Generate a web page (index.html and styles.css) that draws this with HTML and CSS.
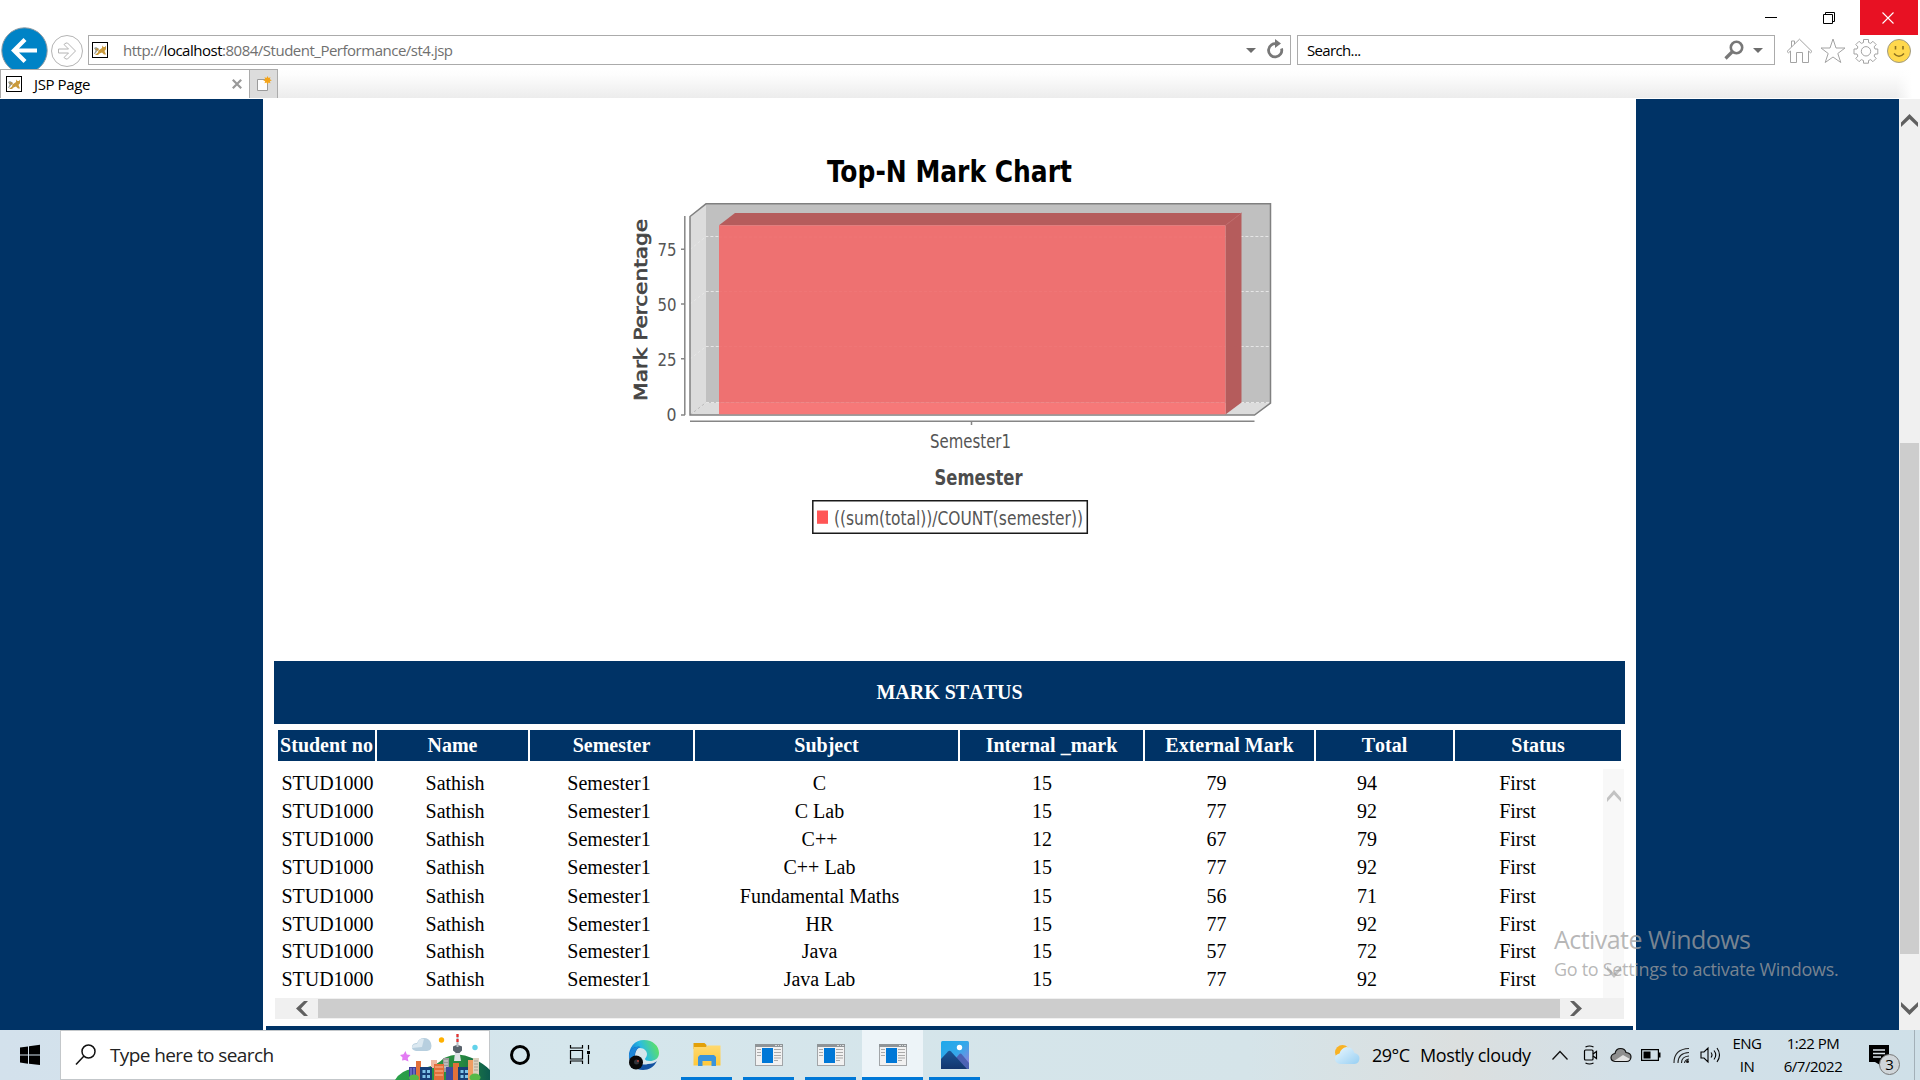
FILE: index.html
```html
<!DOCTYPE html>
<html lang="en">
<head>
<meta charset="utf-8">
<title>JSP Page</title>
<link rel="stylesheet" href="styles.css">
</head>
<body>
<svg width="0" height="0" class="defs">
  <defs>
    <symbol id="cat" viewBox="0 0 16 16"><rect x=".5" y=".5" width="15" height="15" fill="#fff" stroke="#000"/><path d="M6.500 8.500 10 6l.3-2.500L11.500 5h1.300l1.200-1.300v3.500L12.500 9l1.500 3.500h-2L10 10.500l-2.500 1-1.500 1.500H3l3-2.500z" fill="#c99a3c"/><path d="M2 6 4 5l2.500 1.500L5 9.500 3 12H2l1.500-3.500z" fill="#9aa09b"/><path d="M3 7.500 5 6l2 1-1 2z" fill="#b9924a"/></symbol>
    <symbol id="window" viewBox="0 0 28 22"><rect x=".5" y=".5" width="27" height="21" fill="#f1f1f1" stroke="#a2a5a8"/><path d="M0 0h28v3H0z" fill="#8f9497"/><path d="M20 1h2v1h-2zm3 0h1v1h-1zm2 0h2v1h-2z" fill="#d9dcde"/><path d="M7 4h11v15H7z" fill="#0078d7"/><path d="M19 5.500h7M19 8.500h7M19 11.500h7M19 14h7M19 16.500h4M2 5.500h4M2 8.500h4M2 11.500h4" stroke="#aaa" stroke-width="1.200"/></symbol>
    <linearGradient id="edgeTop" x1="0" y1=".6" x2="1" y2=".3"><stop offset="0" stop-color="#0b6fd3"/><stop offset=".45" stop-color="#2bbce0"/><stop offset="1" stop-color="#62e45c"/></linearGradient>
    <linearGradient id="folder" x1="0" y1="0" x2="0" y2="1"><stop offset="0" stop-color="#ffd96f"/><stop offset="1" stop-color="#ffc83a"/></linearGradient>
    <linearGradient id="photo" x1="0" y1="0" x2="1" y2="1"><stop offset="0" stop-color="#1fa8ea"/><stop offset=".5" stop-color="#35a8ea"/><stop offset="1" stop-color="#a878d8"/></linearGradient>
    <linearGradient id="peak" x1="0" y1="0" x2="0" y2="1"><stop offset="0" stop-color="#1c5596"/><stop offset="1" stop-color="#12366e"/></linearGradient>
    <linearGradient id="cloud" x1="0" y1="0" x2="1" y2="1"><stop offset="0" stop-color="#eaf7fe"/><stop offset="1" stop-color="#97cff3"/></linearGradient>
    <linearGradient id="hill" x1="0" y1="0" x2="1" y2="0"><stop offset="0" stop-color="#2ba14a"/><stop offset=".7" stop-color="#27893f"/><stop offset="1" stop-color="#0c5a4e"/></linearGradient>
  </defs>
</svg>

<header class="browser">
  <div class="titlebar">
    <svg class="winbtn" width="58" height="35"><path d="M22 17.500h12" stroke="#000"/></svg>
    <svg class="winbtn" width="59" height="35"><path d="M22.500 14.500h9v9h-9zM24.500 14.500v-2h9v9h-2" fill="none" stroke="#000"/></svg>
    <svg class="winbtn close" width="58" height="35"><path d="m22.500 12.500 11 11m0-11-11 11" stroke="#fff" stroke-width="1.100"/></svg>
  </div>
  <div class="navbar">
    <svg class="back" width="50" height="42"><circle cx="24.500" cy="23.500" r="22.700" fill="#0083c6" stroke="#8d9aa3"/><path d="M37 23.500H15M25 12.500l-11 11 11 11" fill="none" stroke="#fff" stroke-width="4.200"/></svg>
    <svg class="forward" width="34" height="34"><circle cx="17" cy="16" r="15.500" fill="#fff" stroke="#b4b4b4"/><path d="M8.500 14h10l-4.500-4.500 2-1.500h1.500l8 8-8 8H16l-2-1.500 4.500-4.500h-10z" fill="#fff" stroke="#b4b4b4"/></svg>
    <div class="field address">
      <svg width="16" height="16"><use href="#cat"/></svg>
      <span class="url">http://<b>localhost</b>:8084/Student_Performance/st4.jsp</span>
      <svg class="drop" width="10" height="5"><path d="M0 0h10L5 5z" fill="#6d6d6d"/></svg>
      <svg class="reload" width="18" height="22" viewBox="0 0 18 22"><path d="M11 5A6.600 6.600 0 1 0 15.500 9.500" fill="none" stroke="#787878" stroke-width="2.800"/><path d="M9 0l6 4.500L9 9z" fill="#787878"/></svg>
    </div>
    <div class="field search">
      <span>Search...</span>
      <svg class="lens" width="20" height="20"><circle cx="12.500" cy="7.500" r="5.700" fill="none" stroke="#787878" stroke-width="2.600"/><path d="M8.500 11.500 1.500 18.500" stroke="#787878" stroke-width="3.200"/></svg>
      <svg width="10" height="5"><path d="M0 0h10L5 5z" fill="#6d6d6d"/></svg>
    </div>
    <svg class="tool" width="27" height="26" fill="#fff" stroke="#a3a3a3"><path d="M13.500 1.200 1 13.500l1.500 1.300L4.500 13v11.500h6v-10h6v10h6V13l2 1.800 1.500-1.300zM5.500 9V3h3v3"/></svg>
    <svg class="tool" width="26" height="26" fill="#fff" stroke="#a3a3a3"><path d="m13 1 3 9h9l-7.200 5.500 3 9L13 19l-7.800 5.500 3-9L1 10h9z"/></svg>
    <svg class="tool" width="26" height="26" fill="#fff" stroke="#a3a3a3"><path d="M10.500 1.500h5v3l2.200.9 2.200-2.100 3.300 3.300-2.100 2.300.9 2.100h2.800v5h-2.800l-.9 2.100 2.100 2.300-3.300 3.300-2.200-2.100-2.200.9v2.700h-5v-2.700l-2.200-.9-2.200 2.100-3.300-3.300 2.100-2.300-.9-2.100H1v-5h3l.9-2.100-2.100-2.300 3.300-3.300 2.200 2.100 2.200-.9z"/><circle cx="13" cy="13.300" r="4.700"/></svg>
    <svg class="tool" width="26" height="26"><circle cx="13" cy="13" r="11.500" fill="#ffd84d" stroke="#a09a83"/><path d="M9.500 8v3.500M17 8v3.500" stroke="#8a6f1f" stroke-width="1.600"/><path d="M8 15.500q5 5.500 10 0" fill="none" stroke="#8a6f1f" stroke-width="1.500"/></svg>
  </div>
  <div class="tabs">
    <div class="tab"><svg width="16" height="16"><use href="#cat"/></svg><span>JSP Page</span><svg class="x" width="10" height="10"><path d="m.8.8 8.400 8.400m0-8.400L.8 9.200" stroke="#999" stroke-width="2.200"/></svg></div>
    <div class="newtab"><svg width="16" height="16"><path d="M1.500 3.500h10v11h-10z" fill="#fdfdfd" stroke="#9b9b9b"/><path d="m11.500 0 1 2 2-.7-.7 2 2 1-2 1 .7 2-2-.7-1 2-1-2-2 .7.7-2-2-1 2-1-.7-2 2 .7z" fill="#f5a418"/></svg></div>
  </div>
</header>

<div class="viewport">
  <main class="sheet">
    <svg class="chart" width="700" height="420" viewBox="600 140 700 420" font-family="DejaVu Sans Condensed, DejaVu Sans, sans-serif">
      <text x="827" y="182" font-size="30.500" font-weight="bold" textLength="245" lengthAdjust="spacingAndGlyphs">Top-N Mark Chart</text>
      <path d="M690 216.500 706 204v199l-16 12z" fill="#dcdcdc"/>
      <path d="M690 415 706 403h564.500l-16 12z" fill="#dcdcdc"/>
      <path d="M706 204h564.500v199H706z" fill="#c0c0c0"/>
      <g fill="none" stroke="#e6e6e6" stroke-dasharray="3 2"><path d="M690 249.500 706 236.500h564M690 304 706 291.500h564M690 359 706 346.500h564"/><path d="M706 402.500h564"/><path d="M690 415 706 402.500" stroke="#bbb"/></g>
      <path d="M690 216.500 706 203.800h564.500V403l-16 12H690z" fill="none" stroke="#808080" stroke-width="1.500"/>
      <path d="M719 225.300 735 213h506.500l-16 12.300z" fill="#b55c5c"/>
      <path d="M1225.500 225.300 1241.500 213v189.500l-16 12z" fill="#b55c5c"/>
      <path d="M719 225.300h506.500v177.500H719z" fill="#ee7171"/>
      <path d="M719 402.800h506.500v11.400H719z" fill="#f67878"/>
      <path d="M1225.500 225.300 1241.500 213" stroke="#c06a6a"/>
      <path d="M719 237h506M719 291.500h506M719 346.500h506" stroke="#ef7676" stroke-dasharray="3 2"/>
      <g fill="none" stroke="#868686" stroke-width="1.500"><path d="M684.800 216v199M681 249.300h4M681 304h4M681 358.700h4M681 415h4M690 421.200h564.500M971.500 421v4"/></g>
      <g font-size="18" fill="#555">
        <text x="657.500" y="255.500" textLength="19" lengthAdjust="spacingAndGlyphs">75</text>
        <text x="657.500" y="310.500" textLength="19" lengthAdjust="spacingAndGlyphs">50</text>
        <text x="657.500" y="366.300" textLength="19" lengthAdjust="spacingAndGlyphs">25</text>
        <text x="666.500" y="421" textLength="10" lengthAdjust="spacingAndGlyphs">0</text>
        <text x="930" y="448.300" font-size="19" textLength="81" lengthAdjust="spacingAndGlyphs">Semester1</text>
      </g>
      <text x="934.500" y="485.300" font-size="20.500" font-weight="bold" fill="#4c4c4c" textLength="88" lengthAdjust="spacingAndGlyphs">Semester</text>
      <text transform="translate(647 401) rotate(-90)" font-size="17.500" fill="#444" stroke="#444" stroke-width=".6" textLength="182" lengthAdjust="spacingAndGlyphs">Mark Percentage</text>
      <path d="M812.800 500.700h274.500v32.600H812.800z" fill="#fff" stroke="#1a1a1a" stroke-width="1.500"/>
      <path d="M817 510.500h11v13.300h-11z" fill="#ff5555"/>
      <text x="834" y="525" font-size="19" fill="#555" textLength="249" lengthAdjust="spacingAndGlyphs">((sum(total))/COUNT(semester))</text>
    </svg>

    <section class="marks">
      <h2>MARK STATUS</h2>
      <div class="grid head"><span>Student no</span><span>Name</span><span>Semester</span><span>Subject</span><span>Internal _mark</span><span>External Mark</span><span>Total</span><span>Status</span></div>
      <div class="scrollbox">
        <div class="rows">
          <div class="grid row"><span>STUD1000</span><span>Sathish</span><span>Semester1</span><span>C</span><span>15</span><span>79</span><span>94</span><span>First</span></div>
          <div class="grid row"><span>STUD1000</span><span>Sathish</span><span>Semester1</span><span>C Lab</span><span>15</span><span>77</span><span>92</span><span>First</span></div>
          <div class="grid row"><span>STUD1000</span><span>Sathish</span><span>Semester1</span><span>C++</span><span>12</span><span>67</span><span>79</span><span>First</span></div>
          <div class="grid row tall"><span>STUD1000</span><span>Sathish</span><span>Semester1</span><span>C++ Lab</span><span>15</span><span>77</span><span>92</span><span>First</span></div>
          <div class="grid row"><span>STUD1000</span><span>Sathish</span><span>Semester1</span><span>Fundamental Maths</span><span>15</span><span>56</span><span>71</span><span>First</span></div>
          <div class="grid row short"><span>STUD1000</span><span>Sathish</span><span>Semester1</span><span>HR</span><span>15</span><span>77</span><span>92</span><span>First</span></div>
          <div class="grid row"><span>STUD1000</span><span>Sathish</span><span>Semester1</span><span>Java</span><span>15</span><span>57</span><span>72</span><span>First</span></div>
          <div class="grid row"><span>STUD1000</span><span>Sathish</span><span>Semester1</span><span>Java Lab</span><span>15</span><span>77</span><span>92</span><span>First</span></div>
        </div>
        <div class="vbar">
          <svg width="16" height="12"><path d="M1 12V8l7-8 7 8v4L8 4.500z" fill="#c2c2c2"/></svg>
          <svg width="16" height="12"><path d="M1 0v4l7 8 7-8V0L8 7.500z" fill="#c2c2c2"/></svg>
        </div>
      </div>
      <div class="hbar">
        <svg width="12" height="15"><path d="M12 0H8L0 7.500 8 15h4L5 7.500z" fill="#606060"/></svg>
        <div class="thumb"></div>
        <svg width="12" height="15"><path d="M0 0h4l8 7.500L4 15H0l7-7.500z" fill="#606060"/></svg>
      </div>
    </section>
    <div class="footline"></div>
  </main>
  <div class="scroll">
    <svg width="17" height="13"><path d="M0 13V8.500L8.500 0 17 8.500V13L8.500 5z" fill="#606060"/></svg>
    <div class="thumb"></div>
    <svg width="17" height="13"><path d="M0 0v4.500L8.500 13 17 4.500V0L8.500 8z" fill="#606060"/></svg>
  </div>
  <div class="watermark"><p class="big">Activate Windows</p><p class="small">Go to Settings to activate Windows.</p></div>
</div>

<footer class="taskbar">
  <svg width="60" height="50"><path d="M20 17.500 28 16.400v8.100h-8zM29 16.200l11-1.500v9.800H29zM20 25.500h8v8.200l-8-1.200zM29 25.500h11V35l-11-1.300z" fill="#000"/></svg>
  <div class="find">
    <svg width="22" height="22"><circle cx="13.500" cy="7.500" r="6.500" fill="none" stroke="#111" stroke-width="1.500"/><path d="M9 12 1 20.500" stroke="#111" stroke-width="1.500"/></svg>
    <span>Type here to search</span>
    <svg class="city" width="95" height="49" viewBox="395 1031 95 49">
      <path d="M395 1080q6-10 18-11 10 0 18-3 7-2 13-8 14-7 28 0 11 5 18 12v10z" fill="url(#hill)"/>
      <path d="M416 1051q-5-1-4-5 1-3 5-3 2-5 7-5 5 0 7 5 2 7-4 8z" fill="#b7cfdf"/><path d="M412 1048q0-4 5-4 2-6 7-5l-2 8z" fill="#dbe8f0"/>
      <circle cx="441.500" cy="1040" r="2.700" fill="#ffb000"/><circle cx="475" cy="1047.500" r="2.700" fill="#62d2ea"/>
      <path d="m405.500 1051 1.300 3.500 3.700.5-2.800 3 .8 3.500-3.500-1.500-3 .5.500-3-2.500-2.500 3.500-.7z" fill="#e37cf3"/>
      <path d="M455 1052h4.500l1.500 9h-7z" fill="#dde2e6"/><path d="M453 1046.500q4-3 9 0v4l-2.500 2.500H456l-3-2.500z" fill="#59636d"/><path d="M457.500 1034v13" stroke="#b9bfc6" stroke-width="2"/><path d="M457.500 1034v3m0 2v3" stroke="#e8312f" stroke-width="2.200"/>
      <path d="M409 1067h8v13h-8z" fill="#3d3f9a"/><path d="M411 1068v12m3-12v12" stroke="#8d92e8"/>
      <path d="M416 1061h5v19h-5z" fill="#e2713a"/><path d="M431 1060h6v8h-6z" fill="#efb8a2"/><path d="M420 1067h12v13h-12z" fill="#173f77"/><path d="M422.500 1070h3v3h-3zm4.500 0h3v3h-3zm-4.500 5h3v3h-3zm4.500 0h3v3h-3z" fill="#7fc3e8"/>
      <path d="M443 1058h6v14h-6z" fill="#9b9b9b"/><path d="M444 1061h4m-4 3h4m-4 3h4" stroke="#d8d8d8"/>
      <path d="M434 1064h10v16h-10z" fill="#e36f3a"/><path d="M435 1067h8m-8 4h8m-8 4h8" stroke="#f3a479" stroke-width="1.500"/>
      <path d="M446 1067h7v13h-7z" fill="#3d4a9c"/><path d="M453 1063h6v17h-6z" fill="#e2713a"/>
      <path d="M458 1067h12v13h-12z" fill="#173f77"/><path d="M460.500 1070h3v3h-3zm4.500 0h3v3h-3zm-4.500 5h3v3h-3zm4.500 0h3v3h-3z" fill="#7fc3e8"/>
      <path d="M468 1060h5v20h-5z" fill="#ef9d62"/><path d="M473 1058h6v22h-6z" fill="#ddd0bd"/><path d="M474 1061h4m-4 3h4m-4 3h4m-4 3h4" stroke="#a89f92"/>
      <ellipse cx="414" cy="1078" rx="5" ry="3.500" fill="#56b947"/><ellipse cx="475" cy="1077.500" rx="5.500" ry="4" fill="#56b947"/>
    </svg>
  </div>
  <svg width="60" height="50"><circle cx="30" cy="25" r="8.500" fill="none" stroke="#000" stroke-width="3"/></svg>
  <svg width="60" height="50" fill="none" stroke="#000" stroke-width="1.200"><path d="M20.500 15v3h12v-3M20.500 34v-3h12v3M20.500 20.500h12v8.500h-12zM38.500 15v4.500m0 5V34"/><path d="M37 21h3v3h-3z" fill="#000" stroke="none"/></svg>
  <svg class="edge" width="66" height="50"><path d="M19 29C18 17 25 10 34 10c9 0 15 6 15 13 0 6-5 8-9 8-3 0-5-1-5-2s2-2 2-5-3-6-7-6c-6 0-10 5-11 11z" fill="url(#edgeTop)"/><path d="M19 26c1-7 6-10 11-9-4 2-5 6-5 10 1 6 7 9 13 7 4 0 7-1 9-3-3 6-8 9-14 9-8 0-14-6-14-14z" fill="#1252a1"/><path d="M19 25c1-6 6-9 11-8-4 2-6 6-5 11h-6z" fill="#1b86d8"/><circle cx="26" cy="32.500" r="7" fill="#090909"/><circle cx="26.500" cy="32" r="2.500" fill="#30333a"/><circle cx="28" cy="31" r=".9" fill="#c74235"/></svg>
  <div class="app"><svg width="28" height="24"><path d="M.5 0h11l2 2v4H.5z" fill="#e3a008"/><path d="M.5 4h13l1-1.500H27.500V22.500H.5z" fill="url(#folder)"/><path d="M5 23V14l2-2h14l2 2v9h-4.500v-5h-9v5z" fill="#3a94dc"/></svg></div>
  <div class="app"><svg width="28" height="22"><use href="#window"/></svg></div>
  <div class="app"><svg width="28" height="22"><use href="#window"/></svg></div>
  <div class="app active"><svg width="28" height="22"><use href="#window"/></svg></div>
  <div class="app"><svg width="28" height="28"><rect width="28" height="28" rx="1.500" fill="url(#photo)"/><path d="m15 17 3.500-4q1-1 2 0l7.500 9v6H15z" fill="#4c62b4"/><path d="M0 18 7 10.500q1.500-1.500 3 0L26 28H0z" fill="url(#peak)"/><circle cx="18.500" cy="6.500" r="2.700" fill="#fff"/></svg></div>
  <div class="tray">
    <svg width="26" height="22"><circle cx="8.500" cy="8.500" r="7.500" fill="#f9b224"/><path d="M6 20q-5-1-5-5.500 0-4 4.500-5Q7 4 12.500 3q6 0 8 6 5 1 5 5.500-.5 5-5 5.500z" fill="url(#cloud)"/></svg>
    <span class="temp">29°C</span><span class="sky">Mostly cloudy</span>
    <svg class="ic up" width="18" height="12"><path d="m1.500 10.500 7.500-8 7.500 8" fill="none" stroke="#111" stroke-width="1.300"/></svg>
    <svg class="ic meet" width="16" height="22" fill="none" stroke="#000" stroke-width="1.200"><rect x="1.500" y="6" width="8.500" height="10" rx="1"/><path d="m10 10 3.500-2.500v7L10 12M2.500 3q4-2 8 0M2.500 19q4 2 8 0"/></svg>
    <svg class="ic cld" width="22" height="16"><path d="M5 14.500q-4-.5-4-4Q1.500 7 5 6.500 6 1.500 10.500 1.500T16 5.500q5 .5 5 4.500-.5 4.500-4.500 4.500z" fill="#8f8f8f" stroke="#111" stroke-width="1.200"/><path d="M4 14 13 8l7 4q-1.500 2-4 2z" fill="#e3e3e3"/></svg>
    <svg class="ic bat" width="20" height="12"><path d="M.6.6h16.800v10.800H.6z" fill="none" stroke="#000" stroke-width="1.200"/><path d="M2.500 2.500h7v7h-7zM18 3.500h1.500v5H18z"/></svg>
    <svg class="ic wifi" width="17" height="17" fill="none" stroke="#222" stroke-width="1.100"><path d="M1 16Q1 2 16 1.500M5 16Q5 6 16 5.500M8.500 16q0-6.500 7.500-7"/><path d="M11.500 16q.5-3.500 4.500-4"/><circle cx="14.500" cy="14.500" r="1" fill="#000"/></svg>
    <svg class="ic" width="22" height="18" fill="none" stroke="#000" stroke-width="1.100"><path d="M1 6v6h3l4 4V2L4 6zM11 6.500q2 2.500 0 5M14 4.500q3.500 4.500 0 9M17 2q5 7 0 14"/></svg>
    <div class="two lang"><span>ENG</span><span>IN</span></div>
    <div class="two clock"><span>1:22 PM</span><span>6/7/2022</span></div>
    <div class="note"><svg width="20" height="20"><path d="M0 0h20v17h-9v3l-5-3H0z"/><path d="M4 5h12M4 8.500h12M4 12h8" stroke="#dbe4ea" stroke-width="1.300"/></svg><span>3</span></div>
    <div class="peek"></div>
  </div>
</footer>
</body>
</html>
```
FILE: styles.css
```css
* { box-sizing: border-box; }
body { margin: 0; width: 1920px; height: 1080px; overflow: hidden; background: #fff; font-family: "Open Sans", "Noto Sans", sans-serif; color: #000; display: flex; flex-direction: column; }
svg { display: block; flex: none; }
span, p { white-space: nowrap; }
.defs { position: absolute; }

/* browser chrome */
.browser { height: 99px; flex: none; }
.titlebar { height: 35px; display: flex; justify-content: flex-end; padding-right: 2px; }
.close { background: #e81123; }
.navbar { height: 34px; display: flex; align-items: flex-start; }
.back { margin-top: -8px; }
.field { height: 30px; border: 1px solid #ababab; display: flex; align-items: center; font-size: 15px; }
.address { width: 1203px; margin-left: 4px; padding: 0 6px 0 3px; }
.url { margin-left: 15px; color: #707070; letter-spacing: -0.49px; }
.url b { font-weight: 400; color: #000; }
.drop { margin-left: auto; margin-right: 10px; }
.search { width: 478px; margin-left: 6px; padding: 0 11px 0 9px; letter-spacing: -0.65px; }
.lens { margin-left: auto; margin-right: 9px; }
.tool { margin: 3px 0 0 7px; }
.search + .tool { margin-left: 11px; }
.tabs { height: 30px; display: flex; padding-bottom: 1px; background: linear-gradient(90deg, transparent 1896px, #fff 1912px), linear-gradient(#fff, #fdfdfd 20%, #ececec 97%, #fff 98%); }
.tab { width: 250px; border: 1px solid #ababab; border-bottom: 0; background: #fff; display: flex; align-items: center; padding: 0 7px 0 5px; font-size: 15px; letter-spacing: -0.4px; }
.tab span { margin-left: 12px; }
.tab .x { margin-left: auto; }
.newtab { width: 28px; border: 1px solid #ababab; border-left: 0; border-bottom: 0; background: #dcdcdc; display: flex; align-items: center; padding-left: 6px; }

/* page */
.viewport { position: relative; height: 931px; flex: none; display: flex; background: #003366; padding-left: 263px; }
.sheet { width: 1373px; background: #fff; display: flex; flex-direction: column; }
.chart { margin: 41px 0 0 337px; }
.marks { margin: 101px 0 0 11px; width: 1351px; font-family: "Liberation Serif", serif; font-size: 20px; font-kerning: none; }
h2 { margin: 0; height: 63px; background: #003366; color: #fff; font-size: 20px; line-height: 62px; text-align: center; }
.grid { display: grid; text-align: center; }
.head { margin: 6px 0 8px 4px; grid-template-columns: 97px 151px 163px 263px 183px 169px 137px 166px; gap: 2px; height: 31px; line-height: 31px; color: #fff; font-weight: 700; }
.head span { background: #003366; }
.scrollbox { display: flex; justify-content: space-between; margin: 0 1px; height: 229px; overflow: hidden; }
.row { grid-template-columns: 105px 150px 158px 263px 182px 167px 134px 167px; height: 28px; line-height: 29px; }
.row.tall { height: 29px; }
.row.short { height: 27px; }
.vbar { width: 21px; background: #f8f8f8; display: flex; flex-direction: column; justify-content: space-between; align-items: center; padding: 21px 0 20px; }
.hbar { margin: 0 1px; height: 21px; background: #f0f0f0; display: flex; align-items: center; padding: 0 42px 0 21px; }
.hbar .thumb { width: 1242px; height: 19px; background: #cdcdcd; margin: 0 10px; }
.footline { margin: auto 3px 0; height: 4px; background: #003366; }
.scroll { margin-left: auto; width: 21px; background: #f0f0f0; display: flex; flex-direction: column; align-items: center; padding: 15px 0; }
.scroll .thumb { width: 19px; height: 511px; margin: 316px 0 48px; background: #cdcdcd; }
.watermark { position: absolute; left: 1554px; top: 821px; color: rgba(160, 160, 160, .75); }
.watermark p { margin: 0; }
.big { font-size: 25px; line-height: 38px; letter-spacing: -0.55px; }
.small { font-size: 18px; line-height: 22px; letter-spacing: -0.3px; }

/* taskbar */
.taskbar { height: 50px; flex: none; display: flex; background: linear-gradient(90deg, #d3e1ec, #d5e6ec 30%, #d5e4e9 65%, #dbdfdf 76%, #d2e0e8 85%, #cfe0e8); }
.find { width: 430px; border: 1px solid #c3c7ca; background: #fff; display: flex; align-items: center; padding-left: 14px; font-size: 19px; color: #222; letter-spacing: -0.6px; }
.find span { margin-left: 13px; }
.city { margin-left: auto; margin-right: -1px; }
.edge { margin-right: -6px; }
.app { width: 51px; margin-left: 11px; border-bottom: 3px solid #0078d7; display: flex; align-items: center; justify-content: center; padding-top: 2px; }
.app.active { width: 61px; margin: 0 -5px 0 6px; background: #edf4f8; }
.tray { margin-left: auto; display: flex; align-items: center; width: 586px; }
.temp { margin-left: 12px; width: 48px; font-size: 18px; letter-spacing: -0.5px; }
.sky { width: 126px; font-size: 18px; letter-spacing: -0.35px; }
.up { margin-left: 5px; }
.meet { margin-left: 14px; }
.cld { margin-left: 11px; }
.bat { margin-left: 9px; }
.wifi { margin: 0 10px 0 12px; }
.two { display: flex; flex-direction: column; align-items: center; font-size: 15px; line-height: 23px; letter-spacing: -0.5px; }
.lang { width: 40px; margin-left: 5px; }
.clock { width: 70px; margin-left: 11px; }
.note { position: relative; margin-left: 21px; height: 20px; }
.note span { position: absolute; left: 10px; top: 9px; width: 21px; height: 21px; border: 1px solid #777; border-radius: 50%; background: #cfd5d9; font-size: 15px; line-height: 19px; text-align: center; }
.peek { width: 1px; height: 50px; margin: 0 5px 0 auto; background: #a3b0b8; }
```
